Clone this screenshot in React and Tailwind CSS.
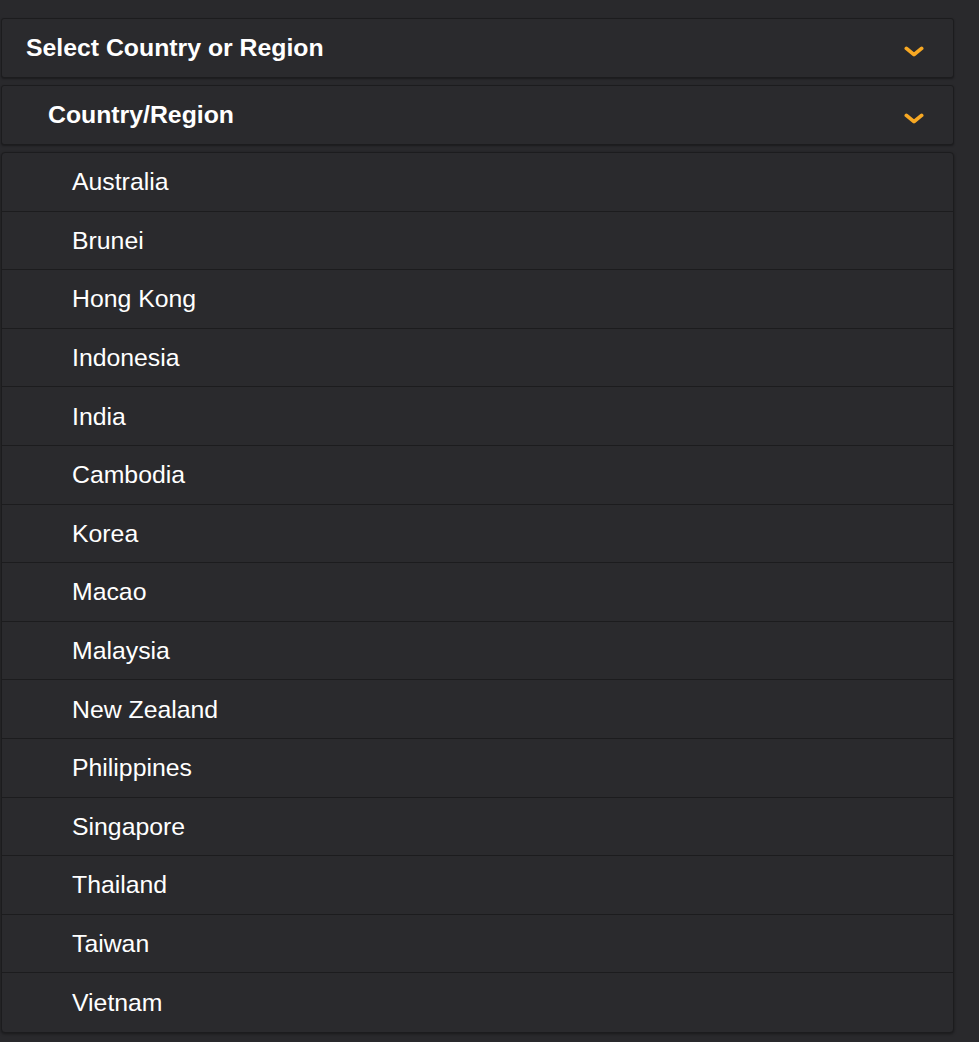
import React from 'react';

const countries = [
    "Australia",
    "Brunei",
    "Hong Kong",
    "Indonesia",
    "India",
    "Cambodia",
    "Korea",
    "Macao",
    "Malaysia",
    "New Zealand",
    "Philippines",
    "Singapore",
    "Thailand",
    "Taiwan",
    "Vietnam",
];

// Orange chevron used on the accordion headers
const Chevron = () => (
    <svg width="20" height="12" viewBox="0 0 20 12" className="mt-[7px] shrink-0">
        <path d="M2.4 2.4 L10 8.6 L17.6 2.4" fill="none" stroke="#f7a823" strokeWidth="3.8" strokeLinecap="round" strokeLinejoin="round" />
    </svg>
);

const Header = ({ title, indent }) => (
    <div className="flex h-[60px] items-center justify-between rounded-[3px] border border-[#1c1c1e] bg-[#2a2a2d] pr-[29px] shadow-[0_1px_2px_rgba(0,0,0,0.35)]">
        <span className={`${indent} text-[24.8px] font-bold text-white`}>{title}</span>
        <Chevron />
    </div>
);

export default function App() {
    return (
        <div className="min-h-[1042px] w-full bg-[#29292c] pt-[18px] pl-[1px]" style={{ fontFamily: '"Liberation Sans", Arial, sans-serif' }}>
            <div className="flex w-[953px] flex-col gap-[7px]">
                <Header title="Select Country or Region" indent="pl-[24px]" />
                <Header title="Country/Region" indent="pl-[46px]" />

                <div className="flex flex-col overflow-hidden rounded-[4px] border border-[#1c1c1e] bg-[#2a2a2d] shadow-[0_1px_3px_rgba(0,0,0,0.4)]">
                    {countries.map((name, idx) => (
                        <div
                            key={name}
                            className={
                                idx < countries.length - 1
                                    ? "flex h-[58.6px] items-center border-b border-[#1c1c1e] pl-[70px]"
                                    : "flex h-[58.6px] items-center pl-[70px]"
                            }
                        >
                            <span className="text-[24.8px] text-white">{name}</span>
                        </div>
                    ))}
                </div>
            </div>
        </div>
    );
}
